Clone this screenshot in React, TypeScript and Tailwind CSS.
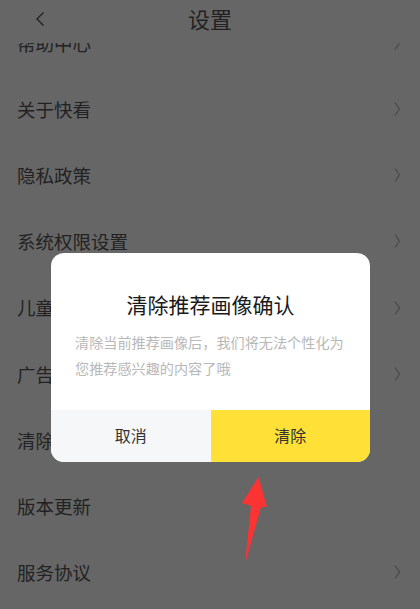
const rows: { label: string; chevron: boolean }[] = [
  { label: "帮助中心", chevron: true },
  { label: "关于快看", chevron: true },
  { label: "隐私政策", chevron: true },
  { label: "系统权限设置", chevron: true },
  { label: "儿童模式", chevron: true },
  { label: "广告设置", chevron: true },
  { label: "清除推荐画像", chevron: false },
  { label: "版本更新", chevron: false },
  { label: "服务协议", chevron: true },
];

export default function App() {
  return (
    <div
      className="relative h-[609px] w-[420px] overflow-hidden bg-[#666666] text-[#222222]"
      style={{ fontFamily: '"Noto Sans CJK SC", sans-serif' }}
    >
      <header className="relative z-10 flex h-[43px] items-center justify-center bg-[#666666]">
        <svg className="absolute left-[34px] top-[11px]" width="12" height="16" viewBox="0 0 12 16" fill="none">
          <path d="M9.5 1.5 L3 8 L9.5 14.5" stroke="#222222" strokeWidth="1.4" />
        </svg>
        <h1 className="mb-[7px] text-[22px] font-normal leading-none">设置</h1>
      </header>

      <ul className="mt-[-33px] flex flex-col">
        {rows.map((r) => (
          <li key={r.label} className="flex h-[66.15px] items-center justify-between pl-[17px] pr-[19px]">
            <span className="text-[18.5px] leading-none">{r.label}</span>
            {r.chevron && (
              <svg width="7" height="16" viewBox="0 0 7 16" fill="none">
                <path d="M1 1.5 L5.5 8 L1 14.5" stroke="#4a4a4a" strokeWidth="1.3" />
              </svg>
            )}
          </li>
        ))}
      </ul>

      <div className="absolute left-[51px] top-[253px] z-20 flex h-[209px] w-[319px] flex-col overflow-hidden rounded-[13px] bg-white">
        <div className="flex-1 px-[24px] pt-[37px]">
          <h2 className="text-center text-[21px] font-normal leading-[28px] text-[#1a1a1a]">清除推荐画像确认</h2>
          <p className="mt-[11px] text-[14.15px] leading-[26px] text-[#b8b8b8]">
            清除当前推荐画像后，我们将无法个性化为您推荐感兴趣的内容了哦
          </p>
        </div>
        <div className="flex h-[52px] text-[16px] text-[#333333]">
          <button className="flex-1 bg-[#f6f7f9] pb-[2px]">取消</button>
          <button className="flex-1 bg-[#fee037] pb-[2px]">清除</button>
        </div>
      </div>

      <svg className="absolute left-0 top-0 z-30" width="420" height="609" viewBox="0 0 420 609">
        <path d="M258.5 477 L242 503 L251 506 L245 564 L261 507 L267 507 Z" fill="#fb3333" />
      </svg>
    </div>
  );
}
